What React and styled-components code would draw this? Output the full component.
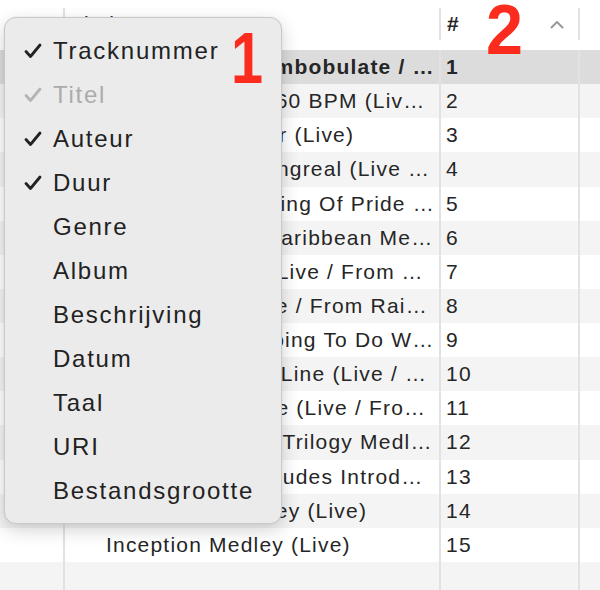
import React from 'react';
import styled, { createGlobalStyle } from 'styled-components';

const GlobalStyle = createGlobalStyle`
  html, body {
    margin: 0;
    padding: 0;
    background: #ffffff;
  }
  body {
    font-family: "Liberation Sans", Arial, sans-serif;
    color: #262626;
  }
`;

const ROW_H = 34.13;

const tracks = [
  'Holmes - Discombobulate / From Sherlock Holmes (Live)',
  'Rome Chase - 160 BPM (Live / From Angels & Demons)',
  'Zoo: Madagascar (Live)',
  'Chevalier De Sangreal (Live / From The Da Vinci Code)',
  'The Lion King: King Of Pride Rock (Live)',
  'Pirates Of The Caribbean Medley (Live)',
  "You're So Cool (Live / From True Romance)",
  'Road Movie (Live / From Rain Man)',
  'What Are You Going To Do When You Are Not Saving The World',
  'Journey: To The Line (Live / From The Thin Red Line)',
  'Now We Are Free (Live / From Gladiator)',
  'The Dark Knight Trilogy Medley (Live)',
  'Interstellar – Includes Introduction (Live)',
  'Interstellar Medley (Live)',
  'Inception Medley (Live)',
];

const menuItems = [
  { label: 'Tracknummer', checked: true },
  { label: 'Titel', checked: true, disabled: true },
  { label: 'Auteur', checked: true },
  { label: 'Duur', checked: true },
  { label: 'Genre' },
  { label: 'Album' },
  { label: 'Beschrijving' },
  { label: 'Datum' },
  { label: 'Taal' },
  { label: 'URI' },
  { label: 'Bestandsgrootte' },
];

const Page = styled.div`
  position: relative;
  width: 600px;
  height: 590px;
  overflow: hidden;
  background: #ffffff;
`;

const Table = styled.div`
  display: flex;
  flex-direction: column;
`;

const Columns = `
  display: grid;
  grid-template-columns: 65px 376px 139px 20px;
`;

const HeaderRow = styled.div`
  ${Columns}
  height: 50px;
  background: #ffffff;
`;

const HeaderCell = styled.div`
  position: relative;
  display: flex;
  align-items: center;
  padding-left: ${p => p.$pad || 0}px;
  font-size: 21px;
  letter-spacing: 1px;
  font-weight: ${p => (p.$bold ? 700 : 400)};
  color: #262626;
  border-right: ${p => (p.$divider ? '2px solid #e2e2e2' : 'none')};
  margin: 8px 0 10px;
`;

const SortChevron = styled.svg`
  margin-left: auto;
  margin-right: 14px;
`;

const Row = styled.div`
  ${Columns}
  height: ${ROW_H}px;
  background: ${p => (p.$selected ? '#dcdcdc' : p.$striped ? '#f4f4f4' : '#ffffff')};
  font-weight: ${p => (p.$selected ? 700 : 400)};
`;

const Cell = styled.div`
  display: flex;
  align-items: center;
  min-width: 0;
  padding-left: ${p => p.$pad || 0}px;
  padding-right: ${p => p.$padRight || 0}px;
  font-size: 21px;
  letter-spacing: 1.2px;
  border-right: ${p => (p.$divider ? '2px solid #e2e2e2' : 'none')};
`;

const Ellipsis = styled.span`
  display: block;
  white-space: nowrap;
  overflow: hidden;
  text-overflow: ellipsis;
`;

const Menu = styled.div`
  position: absolute;
  left: 4px;
  top: 17px;
  width: 276px;
  padding: 11px 0 10px;
  display: flex;
  flex-direction: column;
  background: #ebebeb;
  border: 1px solid #c9c9c9;
  border-radius: 12px;
  box-shadow: 0 6px 18px rgba(0, 0, 0, 0.18), 0 0 2px rgba(0, 0, 0, 0.08);
`;

const MenuItem = styled.div`
  display: flex;
  align-items: center;
  height: 44px;
  font-size: 24px;
  letter-spacing: 1.75px;
  color: ${p => (p.$disabled ? '#ababab' : '#222222')};
`;

const CheckSlot = styled.div`
  width: 48px;
  display: flex;
  justify-content: flex-start;
  padding-left: 19px;
  box-sizing: border-box;
`;

const Callout = styled.div`
  position: absolute;
  left: ${p => p.$x}px;
  top: ${p => p.$y}px;
  font-family: "Liberation Sans", Arial, sans-serif;
  font-weight: 700;
  font-size: ${p => p.$size}px;
  line-height: 1;
  color: #fb2b1d;
  transform: scaleX(${p => p.$squeeze || 1});
  transform-origin: center;
`;

const Check = ({ muted }) => (
  <svg width="18" height="16" viewBox="0 0 18 16">
    <polyline
      points="2,8.5 6.5,13.5 16,2"
      fill="none"
      stroke={muted ? '#b4b4b4' : '#222222'}
      strokeWidth="2.8"
      strokeLinecap="round"
      strokeLinejoin="round"
    />
  </svg>
);

export default function App() {
  return (
    <Page>
      <GlobalStyle />
      <Table>
        <HeaderRow>
          <HeaderCell $divider />
          <HeaderCell $pad={6} $divider>Titel</HeaderCell>
          <HeaderCell $pad={6} $bold $divider>
            #
            <SortChevron width="14" height="9" viewBox="0 0 14 9">
              <polyline
                points="1.5,7.5 7,2 12.5,7.5"
                fill="none"
                stroke="#9a9a9a"
                strokeWidth="2"
                strokeLinecap="round"
                strokeLinejoin="round"
              />
            </SortChevron>
          </HeaderCell>
          <HeaderCell />
        </HeaderRow>
        {[...tracks, null].map((title, i) => (
          <Row key={i} $selected={i === 0} $striped={i % 2 === 1}>
            <Cell $divider />
            <Cell $pad={41} $padRight={4} $divider>
              {title && <Ellipsis>{title}</Ellipsis>}
            </Cell>
            <Cell $pad={5} $divider>{title ? i + 1 : ''}</Cell>
            <Cell />
          </Row>
        ))}
      </Table>

      <Menu>
        {menuItems.map(item => (
          <MenuItem key={item.label} $disabled={item.disabled}>
            <CheckSlot>{item.checked && <Check muted={item.disabled} />}</CheckSlot>
            {item.label}
          </MenuItem>
        ))}
      </Menu>

      <Callout $x={227} $y={22} $size={72} $squeeze={0.8}>1</Callout>
      <Callout $x={485} $y={-5} $size={70} $squeeze={0.95}>2</Callout>
    </Page>
  );
}
